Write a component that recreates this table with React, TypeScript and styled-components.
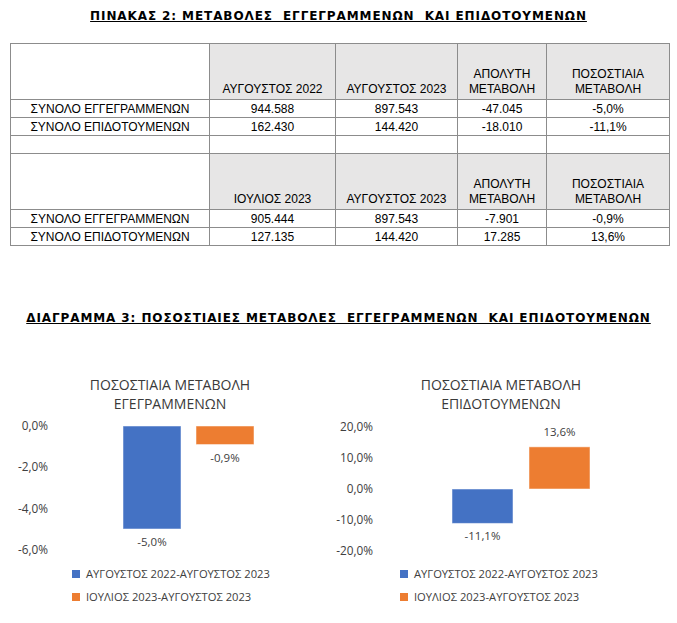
import React from 'react';
import styled, { createGlobalStyle } from 'styled-components';

const GlobalStyle = createGlobalStyle`
  body {
    margin: 0;
    background: #ffffff;
  }
`;

const BLUE = '#4472c4';
const ORANGE = '#ed7d31';

const Page = styled.div`
  width: 677px;
  padding-top: 9px;
  color: #000;
`;

const Heading = styled.h2<{ $gap: number }>`
  margin: ${(p) => p.$gap}px 0 0;
  font-family: 'DejaVu Sans', Verdana, sans-serif;
  font-size: 12px;
  line-height: 14px;
  font-weight: 700;
  letter-spacing: 0.9px;
  text-align: center;
  text-decoration: underline;
  white-space: pre;
`;

const Table = styled.table`
  margin: 20px 0 0 10px;
  border-collapse: collapse;
  table-layout: fixed;
  width: 659px;
  font-family: 'Liberation Sans', Arial, sans-serif;
  font-size: 12px;
  color: #000;
`;

const HeadCell = styled.td<{ $blank?: boolean }>`
  height: 53px;
  padding: 0 0 2px;
  border: 1px solid #8c8c8c;
  background: ${(p) => (p.$blank ? '#ffffff' : '#e7e6e6')};
  text-align: center;
  vertical-align: bottom;
  line-height: 15px;
`;

const Cell = styled.td`
  height: 17px;
  padding: 0;
  border: 1px solid #8c8c8c;
  text-align: center;
  line-height: 16px;
`;

const ChartRow = styled.div`
  display: flex;
  margin-top: 50px;
`;

const ChartPanel = styled.div`
  width: 338px;
  display: flex;
  flex-direction: column;
`;

const ChartTitle = styled.div<{ $shift: number }>`
  margin-left: ${(p) => p.$shift}px;
  font-family: 'Open Sans', 'Noto Sans', sans-serif;
  font-size: 14px;
  line-height: 19px;
  color: #3a3a3a;
  text-align: center;
`;

const Plot = styled.svg`
  display: block;
  overflow: visible;
`;

const Legend = styled.ul<{ $left: number }>`
  list-style: none;
  margin: 0;
  padding: 0 0 0 ${(p) => p.$left}px;
`;

const LegendItem = styled.li<{ $color: string }>`
  display: flex;
  align-items: center;
  gap: 6px;
  height: 23px;
  font-family: 'Open Sans', 'Noto Sans', sans-serif;
  font-size: 11.2px;
  color: #404040;

  &::before {
    content: '';
    width: 8px;
    height: 8px;
    background: ${(p) => p.$color};
  }
`;

type Bar = { value: number; x: number; width: number; color: string };

type ChartProps = {
  title: string[];
  titleShift: number;
  ticks: number[];
  zeroY: number;
  pxPerPct: number;
  labelX: number;
  bars: Bar[];
  legendLeft: number;
};

const fmt = (v: number) => `${v.toFixed(1).replace('.', ',')}%`;

const PercentChart = ({ title, titleShift, ticks, zeroY, pxPerPct, labelX, bars, legendLeft }: ChartProps) => (
  <ChartPanel>
    <ChartTitle $shift={titleShift}>
      {title.map((line) => (
        <div key={line}>{line}</div>
      ))}
    </ChartTitle>
    <Plot width="338" height="149">
      <g fontFamily="'Open Sans', 'Noto Sans', sans-serif" fontSize="11.8" fill="#404040">
        {ticks.map((t) => (
          <text key={t} x={labelX} y={zeroY - t * pxPerPct + 1} textAnchor="end" dominantBaseline="middle">
            {fmt(t)}
          </text>
        ))}
      </g>
      {bars.map((b) => {
        const h = Math.abs(b.value) * pxPerPct;
        const top = b.value >= 0 ? zeroY - h : zeroY;
        const labelY = b.value >= 0 ? top - 14 : top + h + 14;
        return (
          <g key={b.color}>
            <rect x={b.x} y={top} width={b.width} height={h} fill={b.color} stroke="#ffffff" strokeOpacity="0.5" />
            <text
              x={b.x + b.width / 2}
              y={labelY}
              textAnchor="middle"
              dominantBaseline="middle"
              fontFamily="'Open Sans', 'Noto Sans', sans-serif"
              fontSize="11.5"
              fill="#404040"
            >
              {fmt(b.value)}
            </text>
          </g>
        );
      })}
    </Plot>
    <Legend $left={legendLeft}>
      <LegendItem $color={BLUE}>ΑΥΓΟΥΣΤΟΣ 2022-ΑΥΓΟΥΣΤΟΣ 2023</LegendItem>
      <LegendItem $color={ORANGE}>ΙΟΥΛΙΟΣ 2023-ΑΥΓΟΥΣΤΟΣ 2023</LegendItem>
    </Legend>
  </ChartPanel>
);

const blocks = [
  {
    from: 'ΑΥΓΟΥΣΤΟΣ 2022',
    rows: [
      ['ΣΥΝΟΛΟ ΕΓΓΕΓΡΑΜΜΕΝΩΝ', '944.588', '897.543', '-47.045', '-5,0%'],
      ['ΣΥΝΟΛΟ ΕΠΙΔΟΤΟΥΜΕΝΩΝ', '162.430', '144.420', '-18.010', '-11,1%'],
    ],
  },
  {
    from: 'ΙΟΥΛΙΟΣ 2023',
    rows: [
      ['ΣΥΝΟΛΟ ΕΓΓΕΓΡΑΜΜΕΝΩΝ', '905.444', '897.543', '-7.901', '-0,9%'],
      ['ΣΥΝΟΛΟ ΕΠΙΔΟΤΟΥΜΕΝΩΝ', '127.135', '144.420', '17.285', '13,6%'],
    ],
  },
];

export default function App() {
  return (
    <Page>
      <GlobalStyle />
      <Heading $gap={0}>{'ΠΙΝΑΚΑΣ 2: ΜΕΤΑΒΟΛΕΣ  ΕΓΓΕΓΡΑΜΜΕΝΩΝ  ΚΑΙ ΕΠΙΔΟΤΟΥΜΕΝΩΝ'}</Heading>
      <Table>
        <colgroup>
          <col style={{ width: 199 }} />
          <col style={{ width: 126 }} />
          <col style={{ width: 122 }} />
          <col style={{ width: 89 }} />
          <col style={{ width: 123 }} />
        </colgroup>
        <tbody>
          {blocks.map((block, i) => (
            <React.Fragment key={block.from}>
              {i > 0 && (
                <tr>
                  {[0, 1, 2, 3, 4].map((c) => (
                    <Cell key={c} />
                  ))}
                </tr>
              )}
              <tr>
                <HeadCell $blank />
                <HeadCell>{block.from}</HeadCell>
                <HeadCell>ΑΥΓΟΥΣΤΟΣ 2023</HeadCell>
                <HeadCell>
                  ΑΠΟΛΥΤΗ
                  <br />
                  ΜΕΤΑΒΟΛΗ
                </HeadCell>
                <HeadCell>
                  ΠΟΣΟΣΤΙΑΙΑ
                  <br />
                  ΜΕΤΑΒΟΛΗ
                </HeadCell>
              </tr>
              {block.rows.map((row) => (
                <tr key={row[0]}>
                  {row.map((v, c) => (
                    <Cell key={c}>{v}</Cell>
                  ))}
                </tr>
              ))}
            </React.Fragment>
          ))}
        </tbody>
      </Table>
      <Heading $gap={65}>{'ΔΙΑΓΡΑΜΜΑ 3: ΠΟΣΟΣΤΙΑΙΕΣ ΜΕΤΑΒΟΛΕΣ  ΕΓΓΕΓΡΑΜΜΕΝΩΝ  ΚΑΙ ΕΠΙΔΟΤΟΥΜΕΝΩΝ'}</Heading>
      <ChartRow>
        <PercentChart
          title={['ΠΟΣΟΣΤΙΑΙΑ ΜΕΤΑΒΟΛΗ', 'ΕΓΕΓΡΑΜΜΕΝΩΝ']}
          titleShift={2}
          ticks={[0, -2, -4, -6]}
          zeroY={13}
          pxPerPct={20.6}
          labelX={48}
          bars={[
            { value: -5.0, x: 123, width: 58, color: BLUE },
            { value: -0.9, x: 196, width: 58, color: ORANGE },
          ]}
          legendLeft={72}
        />
        <PercentChart
          title={['ΠΟΣΟΣΤΙΑΙΑ ΜΕΤΑΒΟΛΗ', 'ΕΠΙΔΟΤΟΥΜΕΝΩΝ']}
          titleShift={-12}
          ticks={[20, 10, 0, -10, -20]}
          zeroY={76}
          pxPerPct={3.1}
          labelX={35}
          bars={[
            { value: -11.1, x: 114, width: 61, color: BLUE },
            { value: 13.6, x: 191, width: 61, color: ORANGE },
          ]}
          legendLeft={62}
        />
      </ChartRow>
    </Page>
  );
}
